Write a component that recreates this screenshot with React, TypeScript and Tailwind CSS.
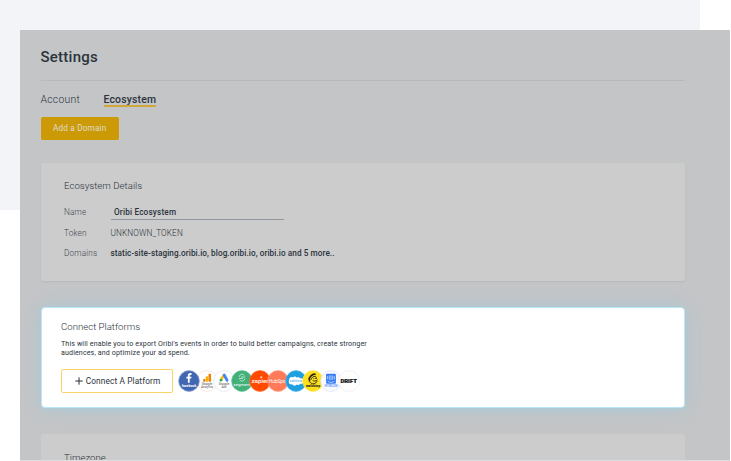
import React from "react";

const Row = ({ label, children }: { label: string; children: React.ReactNode }) => (
  <div className="flex h-5 items-center">
    <span className="w-[46.5px] text-[8.2px] font-light tracking-[0.18px] text-[#3f4750]">{label}</span>
    {children}
  </div>
);

const label = { fontFamily: "Roboto, 'Liberation Sans', sans-serif", textAnchor: "middle" as const };

const Badge = ({ z, fill, stroke, children }: { z: string; fill: string; stroke: string; children: React.ReactNode }) => (
  <svg viewBox="0 0 22 22" className={`relative -mr-[4.2px] size-[22px] shrink-0 ${z}`}>
    <circle cx="11" cy="11" r="10.4" fill={fill} stroke={stroke} strokeWidth="0.7" />
    {children}
  </svg>
);

const Platforms = () => (
  <div className="ml-[4.8px] flex items-center">
    <Badge z="z-10" fill="#4267b2" stroke="#8fa5d4">
      <path d="M9.9 12.8V8.6H8.4V6.8h1.5V5.6c0-1.7.9-2.5 2.3-2.5h1.3v1.8h-.8c-.8 0-1 .4-1 1v.9h1.8l-.3 1.8h-1.5v4.2z" fill="#fff" />
      <text {...label} x="11" y="17.2" fontSize="3.5" fontWeight="700" fill="#fff">facebook</text>
    </Badge>
    <Badge z="z-0" fill="#fff" stroke="#f7e0d0">
      <rect x="7.2" y="8.9" width="2.2" height="2.8" rx=".8" fill="#e37400" />
      <rect x="9.7" y="6.4" width="2.5" height="5.3" fill="#f9ab00" />
      <rect x="12.5" y="3.8" width="2.6" height="7.9" rx=".7" fill="#f08300" />
      <text {...label} x="11" y="15" fontSize="3.4" fill="#555">Google</text>
      <text {...label} x="11" y="18" fontSize="3" fill="#555">Analytics</text>
    </Badge>
    <Badge z="z-0" fill="#fff" stroke="#d9e4fa">
      <path d="M10.8 5.2 8.1 9.7" stroke="#fbbc04" strokeWidth="2.6" />
      <path d="m11.2 5 2.9 5.2" stroke="#4285f4" strokeWidth="2.8" strokeLinecap="round" />
      <circle cx="8" cy="10.2" r="1.4" fill="#34a853" />
      <text {...label} x="11" y="15" fontSize="3.4" fill="#555">Google</text>
      <text {...label} x="11" y="18" fontSize="3" fill="#555">Ads</text>
    </Badge>
    <Badge z="z-0" fill="#43af79" stroke="#60c295">
      <path d="M13.4 5.4a2.9 2.9 0 0 0-5.2 1.5M10 7h4.2M7.8 8.5H12M13.8 8.6a2.9 2.9 0 0 1-5.2 1.4" fill="none" stroke="#c9f0dc" strokeWidth=".8" />
      <text {...label} x="11" y="15.6" fontSize="4.4" fill="#fff">segment</text>
    </Badge>
    <Badge z="z-0" fill="#ff4a00" stroke="#ff6b31">
      <text {...label} x="11" y="13" fontSize="6.2" fontWeight="500" fill="#fff" textLength="17" lengthAdjust="spacingAndGlyphs">zapier</text>
      <path d="M12.2 6.1v2.4M11 7.3h2.4" stroke="#fff" strokeWidth=".6" />
    </Badge>
    <Badge z="z-0" fill="#ff7a59" stroke="#ff9b81">
      <text {...label} x="11" y="13" fontSize="5.3" fontWeight="400" fill="#fff" textLength="18.5" lengthAdjust="spacingAndGlyphs">HubSpot</text>
    </Badge>
    <Badge z="z-0" fill="#1e9fdf" stroke="#54b9e8">
      <path transform="translate(-1.2 -1.1) scale(1.08)" d="M5 10c0-2 2-3 3.5-2 1-1.3 2.8-1 3.4.1 1.5-.8 2.8-.1 3.2.7 2-.4 3.7.8 3.5 2.6-.2 1.8-1.8 2.7-3.5 2.3-.7 1.2-2 1.4-3 .8-1.1 1.5-3.5 1.4-4.3-.2-2 .4-3.2-.8-3.2-2.2 0-.9 0-1.5.4-2.1z" fill="#fff" />
      <text {...label} x="11.3" y="12" fontSize="2.7" fill="#1e9fdf">salesforce</text>
    </Badge>
    <Badge z="z-0" fill="#ffe01b" stroke="#f7e75e">
      <g fill="none" stroke="#27251e" strokeLinecap="round">
        <path d="M7.3 10.1C6.4 7.4 10.7 3.5 13 4.2" strokeWidth="1.7" />
        <path d="M9 9.5c.4-2 2.6-3.6 4.4-3.1.8.2 1 1.2.9 2.2" strokeWidth=".9" />
        <path d="M8 10.4c-1.4.3-.9 2 .5 2 1 2.2 5.6 1.9 6.7-1.3M11 10.7c1.2.8 2.8.5 4.1-.7" strokeWidth=".9" />
        <path d="M11.7 8.6h.2M13.4 8.6h.2" strokeWidth=".8" />
      </g>
      <text {...label} x="11" y="17.4" fontSize="3" fontWeight="900" fill="#222">mailchimp</text>
    </Badge>
    <Badge z="z-0" fill="#f8faff" stroke="#d8e2fb">
      <rect x="6.1" y="3.8" width="9.8" height="10" rx="1.2" fill="#337bf5" />
      <path d="M7.6 6.2v3M9.3 5.5v4.4M11 5.3v4.8M12.7 5.5v4.4M14.4 6.2v3M7.7 11.3c2 1.4 4.7 1.4 6.6 0" fill="none" stroke="#fff" strokeWidth=".6" />
      <text {...label} x="11" y="17.3" fontSize="2.6" fontWeight="700" fill="#6698f8">INTERCOM</text>
    </Badge>
    <Badge z="z-0" fill="#fff" stroke="#ededf0">
      <text {...label} x="10.7" y="13.1" fontSize="5.8" fontWeight="900" fill="#111" stroke="#111" strokeWidth=".2" textLength="16.5" lengthAdjust="spacingAndGlyphs">DRIFT</text>
    </Badge>
  </div>
);

export default function App() {
  return (
    <div className="grid h-[461px] w-[731px] overflow-hidden bg-white font-['Roboto','Liberation_Sans',sans-serif] text-[#2b333c]">
      <div className="col-start-1 row-start-1 h-[210px] w-[700px] bg-[#f3f4f7]" />
      <main className="z-0 col-start-1 row-start-1 ml-5 mt-[30px] flex h-[431px] w-[710px] flex-col overflow-hidden border-b border-[#dcdddf] bg-[#c4c5c7] pl-[20.5px] pr-[45.5px]">
        <h1 className="flex h-[51px] shrink-0 items-center border-b border-[#b7b9bb] pt-[5px] text-[15px] font-medium tracking-[0.25px]">Settings</h1>
        <nav className="mt-[11.5px] flex h-[14px] shrink-0 gap-[23.5px] text-[10.4px] leading-[14px]">
          <span className="font-light tracking-[0.25px]">Account</span>
          <span className="h-[14px] border-b-2 border-[#d1a63b] font-medium tracking-[0.18px]">Ecosystem</span>
        </nav>
        <button className="mt-[10px] h-[23.5px] w-[78.5px] shrink-0 rounded-[2px] bg-[#cc9a07] text-[8.2px] tracking-[0.18px] text-[#dedbd0]">Add a Domain</button>
        <section className="mt-[23px] h-[118px] shrink-0 rounded-[2px] bg-[#cccccc] px-[23.5px] pt-[16.5px] shadow-[0_1px_2px_#b5b7b9]">
          <h2 className="mb-[11px] text-[9.6px] font-light leading-3 tracking-[0.04px]">Ecosystem Details</h2>
          <Row label="Name">
            <span className="mt-px h-[13px] w-[173.5px] border-b border-[#91979e] pl-[3.5px] text-[8.2px] font-medium leading-[11px] tracking-[0.18px]">Oribi Ecosystem</span>
          </Row>
          <div className="mt-px">
            <Row label="Token"><span className="text-[8.2px] font-light tracking-[0.15px]">UNKNOWN_TOKEN</span></Row>
          </div>
          <Row label="Domains"><span className="text-[8.2px] font-medium tracking-[0.08px]">static-site-staging.oribi.io, blog.oribi.io, oribi.io and 5 more..</span></Row>
        </section>
        <section className="mt-[26px] h-[101px] shrink-0 rounded-[4px] border border-[#b7e7f9] bg-white px-[19.5px] pt-[13px] shadow-[0_0_20px_#a9c7d2,0_3px_0_#bbcbd2]">
          <h2 className="text-[9.6px] font-light leading-3 tracking-[0.01px]">Connect Platforms</h2>
          <p className="mt-[5.5px] text-[7.1px] leading-[9px] tracking-[0.12px]">This will enable you to export Oribi's events in order to build better campaigns, create stronger<br />audiences, and optimize your ad spend.</p>
          <div className="mt-3 flex items-center">
            <button className="flex h-[24.5px] w-[112px] items-center justify-center gap-[3px] rounded-[2px] border border-[#fbd466] pl-px text-[8.3px] tracking-[0.12px]">
              <svg className="size-2" viewBox="0 0 8 8"><path d="M4 .3v7.4M.3 4h7.4" stroke="#2b333c" strokeWidth="1" /></svg>Connect A Platform
            </button>
            <Platforms />
          </div>
        </section>
        <section className="mt-[26px] h-16 shrink-0 rounded-t-[2px] bg-[#cccccc] px-[23.5px] pt-[17.5px]">
          <h2 className="text-[9.6px] font-light leading-3 tracking-[0.01px]">Timezone</h2>
        </section>
      </main>
    </div>
  );
}
